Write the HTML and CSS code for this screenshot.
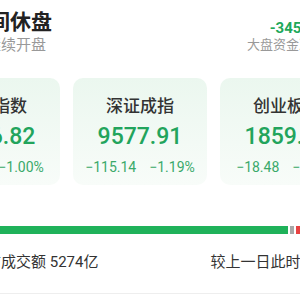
FILE: index.html
```html
<!DOCTYPE html>
<html lang="zh-CN">
<head>
    <meta charset="UTF-8">
    <meta name="viewport" content="width=device-width, initial-scale=1.0">
    <title>股市午间休盘</title>
    <link rel="stylesheet" href="styles.css">
</head>
<body>
    <div class="page">
        <!-- Header -->
        <div class="header">
            <div class="header-left">
                <h1 class="title">股市午间休盘</h1>
                <p class="subtitle">下午一点继续开盘</p>
            </div>
            <div class="header-right">
                <div class="flow">-3456.7亿</div>
                <div class="flow-label">大盘资金净流出</div>
            </div>
        </div>

        <!-- Index cards -->
        <div class="cards">
            <div class="card">
                <div class="card-name">上证指数</div>
                <div class="card-value">3296.82</div>
                <div class="card-change"><span>−33.21</span><span>−1.00%</span></div>
            </div>
            <div class="card">
                <div class="card-name">深证成指</div>
                <div class="card-value">9577.91</div>
                <div class="card-change"><span>−115.14</span><span>−1.19%</span></div>
            </div>
            <div class="card">
                <div class="card-name">创业板指</div>
                <div class="card-value">1859.36</div>
                <div class="card-change"><span>−18.48</span><span>−0.98%</span></div>
            </div>
        </div>

        <!-- Up / flat / down bar -->
        <div class="ratio-bar">
            <div class="seg seg-down" style="flex: 362"></div>
            <div class="seg seg-flat" style="flex: 4"></div>
            <div class="seg seg-up" style="flex: 58"></div>
        </div>

        <div class="summary">
            <span>沪深京两市成交额 5274亿</span>
            <span>较上一日此时缩量9亿</span>
        </div>
    </div>
</body>
</html>
```

FILE: styles.css
```css
/* Global styles */
body {
    margin: 0;
    padding: 0;
    background: #ffffff;
    font-family: Roboto, "Noto Sans CJK SC", sans-serif;
    overflow: hidden;
}

/* The page is wider than the window; it is shown cropped */
.page {
    width: 428px;
    margin-left: -74px;
    border-bottom: 1px solid #eeeeee;
}

/* Header */
.header {
    display: flex;
    justify-content: space-between;
    padding-top: 8px;
}

.title {
    margin: 0;
    font-size: 21px;
    line-height: 28px;
    font-weight: bold;
    color: #222222;
}

.subtitle {
    margin: 0;
    font-size: 15px;
    line-height: 18px;
    color: #999999;
}

.header-right {
    padding-right: 16px;
    text-align: right;
}

.flow {
    margin-top: 11px;
    font-size: 15px;
    line-height: 18px;
    font-weight: bold;
    color: #20a85a;
}

.flow-label {
    font-size: 13px;
    line-height: 16px;
    color: #999999;
}

/* Cards */
.cards {
    display: grid;
    grid-template-columns: repeat(3, 134px);
    gap: 13px;
    margin-top: 24px;
}

.card {
    padding: 16px 0 9px;
    border-radius: 10px;
    background: linear-gradient(to bottom, #ebf7ef, #f8fcf9);
    text-align: center;
}

.card-name {
    font-size: 17px;
    line-height: 24px;
    font-weight: 500;
    color: #333333;
}

.card-value {
    margin-top: 4px;
    font-size: 23px;
    line-height: 30px;
    font-weight: 500;
    color: #22a45c;
}

.card-change {
    display: flex;
    justify-content: center;
    gap: 13px;
    margin-top: 6px;
    font-size: 14px;
    line-height: 18px;
    color: #3aa96a;
}

/* Ratio bar */
.ratio-bar {
    display: flex;
    gap: 2px;
    height: 8px;
    margin-top: 41px;
}

.seg-down {
    background: #1fb25a;
    border-radius: 4px 0 0 4px;
}

.seg-flat {
    background: #a8a8a8;
}

.seg-up {
    background: #e84343;
    border-radius: 0 4px 4px 0;
}

/* Summary row */
.summary {
    display: flex;
    justify-content: space-between;
    margin-top: 17px;
    padding-bottom: 20px;
    font-size: 15px;
    line-height: 22px;
    color: #333333;
}
```
